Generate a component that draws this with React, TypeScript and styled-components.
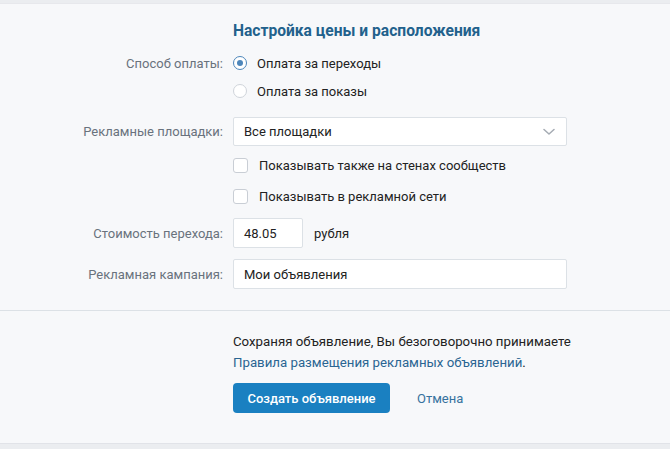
import React from "react";
import styled, { createGlobalStyle } from "styled-components";

const Global = createGlobalStyle`
  html, body { margin: 0; padding: 0; background: #f7f8fa; }
  body { font-family: Roboto, "Noto Sans", "Liberation Sans", sans-serif; font-size: 13px; color: #000; }
`;

const Page = styled.div`
  padding-top: 3px;
  background: #ebedf0;
  width: 670px;
  min-height: 449px;
`;

const Panel = styled.div`
  background: #f7f8fa;
  border-top: 1px solid #e7e8ec;
  border-bottom: 1px solid #e1e3e8;
`;

const Settings = styled.section`
  display: flex;
  flex-direction: column;
  padding: 17px 0 21px;
  border-bottom: 1px solid #dce1e6;
`;

const Row = styled.div<{ $h: number; $mt?: number }>`
  display: grid;
  grid-template-columns: 223px 334px;
  column-gap: 10px;
  align-items: center;
  height: ${(p) => p.$h}px;
  margin-top: ${(p) => p.$mt ?? 0}px;
`;

const Label = styled.div`
  text-align: right;
  color: #69727d;
  font-size: 13px;
  white-space: nowrap;
`;

const Title = styled.h2`
  margin: 0;
  font-size: 15.6px;
  line-height: 20px;
  font-weight: 700;
  color: #22618c;
  white-space: nowrap;
`;

const Choice = styled.label`
  display: flex;
  align-items: center;
  gap: 10px;
  color: #222;
  font-size: 13px;
  cursor: pointer;
`;

const Radio = styled.span<{ $on?: boolean }>`
  box-sizing: border-box;
  width: 14px;
  height: 14px;
  border-radius: 50%;
  background: #fff;
  border: 1px solid ${(p) => (p.$on ? "#4d86ba" : "#cfd4da")};
  display: flex;
  align-items: center;
  justify-content: center;
  &::after {
    content: "";
    width: 6px;
    height: 6px;
    border-radius: 50%;
    background: ${(p) => (p.$on ? "#4d86ba" : "transparent")};
  }
`;

const Check = styled.span`
  box-sizing: border-box;
  width: 15px;
  height: 15px;
  border-radius: 3px;
  background: #fff;
  border: 1px solid #c9ced5;
  margin-right: 1px;
`;

const Field = styled.div<{ $w?: number }>`
  box-sizing: border-box;
  display: flex;
  align-items: center;
  justify-content: space-between;
  width: ${(p) => (p.$w ? `${p.$w}px` : "100%")};
  height: 100%;
  padding: 0 11px 0 10px;
  background: #fff;
  border: 1px solid #dce1e6;
  border-radius: 2px;
  color: #222;
  font-size: 13px;
`;

const Inline = styled.div`
  display: flex;
  align-items: center;
  gap: 11px;
  height: 100%;
  color: #222;
`;

const Footer = styled.section`
  padding: 20px 0 30px 233px;
`;

const Note = styled.p`
  margin: 0;
  line-height: 21px;
  color: #222;
  font-size: 13.25px;
  white-space: nowrap;
`;

const Link = styled.a`
  color: #2a6592;
  text-decoration: none;
  cursor: pointer;
`;

const Actions = styled.div`
  display: flex;
  align-items: center;
  gap: 27px;
  margin-top: 10px;
`;

const Primary = styled.button`
  box-sizing: border-box;
  height: 30px;
  width: 157px;
  border: none;
  border-radius: 4px;
  background: #1a80c1;
  color: #fff;
  font-family: inherit;
  font-size: 13px;
  font-weight: 500;
  cursor: pointer;
`;

const Cancel = styled(Link)`
  font-size: 13px;
  color: #36729e;
`;

const Chevron = () => (
  <svg width="12" height="8" viewBox="0 0 12 8" fill="none">
    <path d="M1 1.5L6 6L11 1.5" stroke="#a5abb3" strokeWidth="1.5" strokeLinecap="round" strokeLinejoin="round" />
  </svg>
);

export default function App() {
  return (
    <>
      <Global />
      <Page>
        <Panel>
          <Settings>
            <Row $h={20}>
              <span />
              <Title>Настройка цены и расположения</Title>
            </Row>
            <Row $h={28} $mt={8}>
              <Label>Способ оплаты:</Label>
              <Choice>
                <Radio $on />
                Оплата за переходы
              </Choice>
            </Row>
            <Row $h={28}>
              <span />
              <Choice>
                <Radio />
                Оплата за показы
              </Choice>
            </Row>
            <Row $h={29} $mt={12}>
              <Label>Рекламные площадки:</Label>
              <Field>
                Все площадки
                <Chevron />
              </Field>
            </Row>
            <Row $h={31} $mt={4}>
              <span />
              <Choice>
                <Check />
                Показывать также на стенах сообществ
              </Choice>
            </Row>
            <Row $h={31}>
              <span />
              <Choice>
                <Check />
                Показывать в рекламной сети
              </Choice>
            </Row>
            <Row $h={30} $mt={6}>
              <Label>Стоимость перехода:</Label>
              <Inline>
                <Field $w={70}>48.05</Field>
                рубля
              </Inline>
            </Row>
            <Row $h={30} $mt={11}>
              <Label>Рекламная кампания:</Label>
              <Field>Мои объявления</Field>
            </Row>
          </Settings>
          <Footer>
            <Note>Сохраняя объявление, Вы безоговорочно принимаете</Note>
            <Note>
              <Link>Правила размещения рекламных объявлений</Link>.
            </Note>
            <Actions>
              <Primary>Создать объявление</Primary>
              <Cancel>Отмена</Cancel>
            </Actions>
          </Footer>
        </Panel>
      </Page>
    </>
  );
}
